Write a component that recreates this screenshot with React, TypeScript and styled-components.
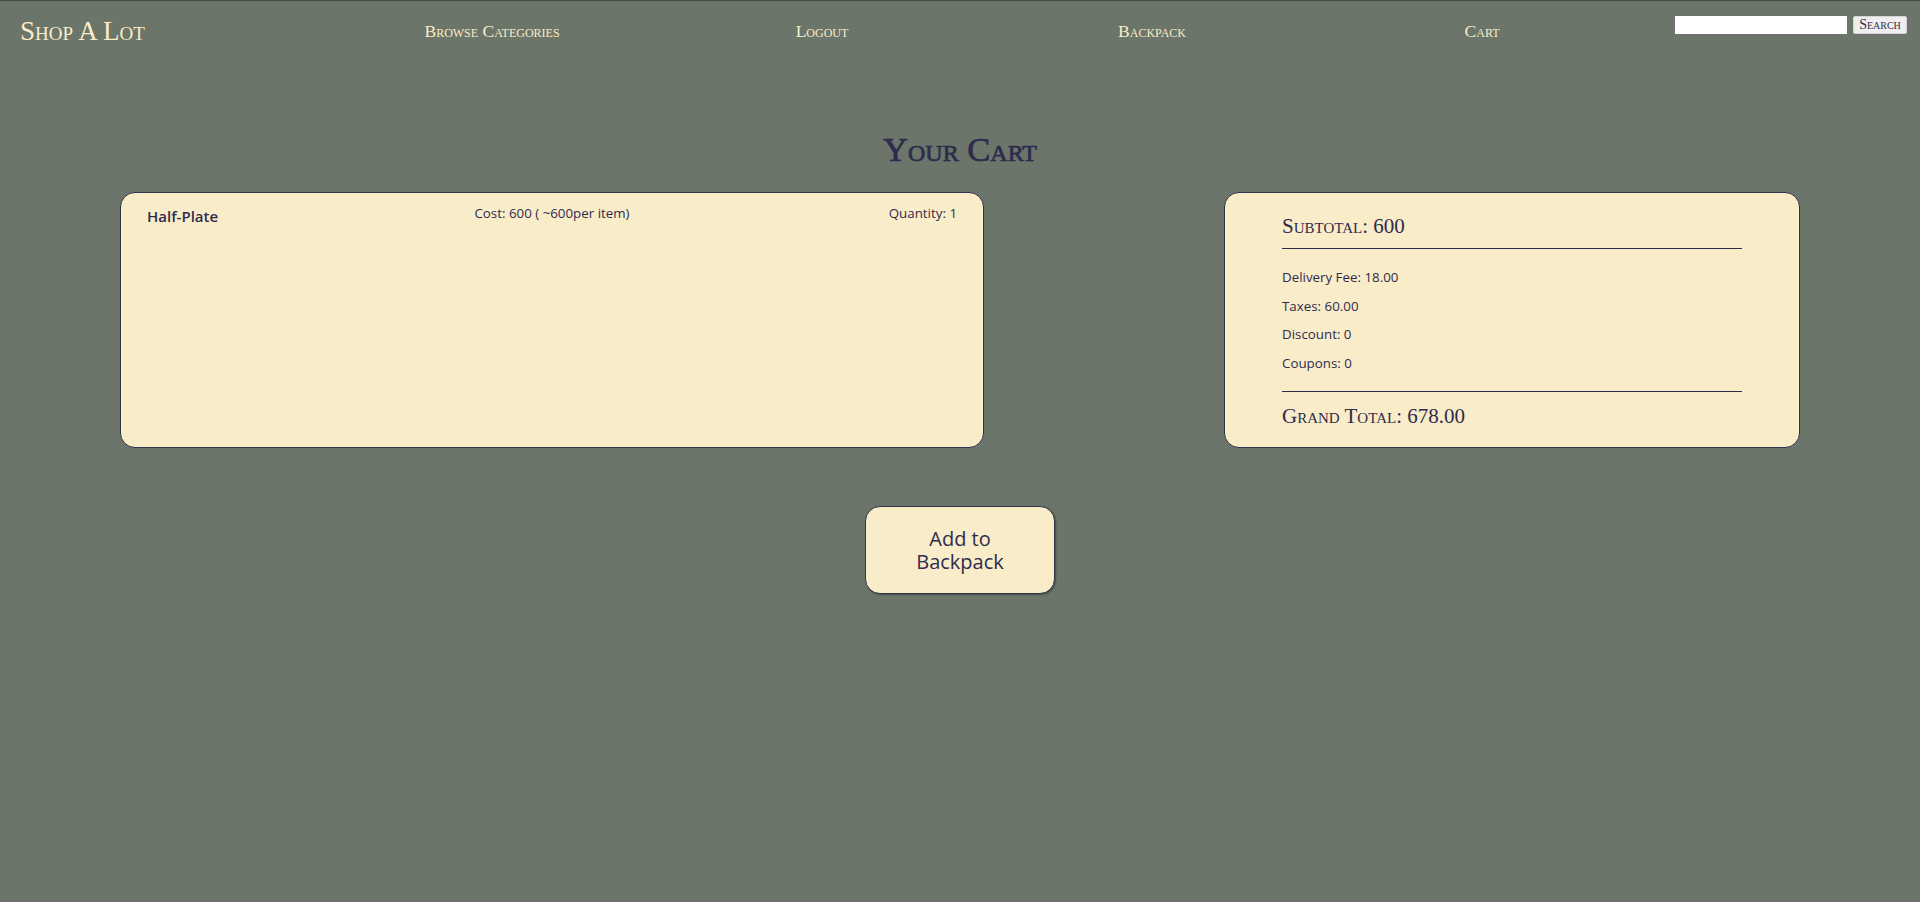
import React from "react";
import styled, { createGlobalStyle } from "styled-components";

const GlobalStyle = createGlobalStyle`
  html, body {
    margin: 0;
    padding: 0;
    background: #6b7569;
  }
  body {
    font-family: "Open Sans", "Liberation Sans", sans-serif;
    color: #2f2b4e;
    min-height: 902px;
    border-top: 1px solid #474c47;
    box-sizing: border-box;
  }
  * { box-sizing: border-box; }
`;

const Header = styled.header`
  display: grid;
  grid-template-columns: 307px repeat(4, 330px) 1fr;
  align-items: center;
  height: 61px;
  padding: 0 13px 0 20px;
`;

const Logo = styled.a`
  font-family: "Liberation Serif", serif;
  font-variant: small-caps;
  font-size: 27px;
  color: #f9ecc8;
  text-decoration: none;
  margin-top: -1px;
`;

const NavLink = styled.a`
  justify-self: center;
  font-family: "Liberation Serif", serif;
  font-variant: small-caps;
  font-size: 17.6px;
  color: #f9ecc8;
  text-decoration: none;
  margin-top: 0;
`;

const SearchForm = styled.form`
  display: flex;
  justify-self: end;
  align-self: start;
  margin-top: 15px;
  gap: 6px;
`;

const SearchInput = styled.input`
  width: 172px;
  height: 18px;
  border: none;
  padding: 0 4px;
  background: #ffffff;
  font-size: 12px;
`;

const SearchButton = styled.button`
  width: 54px;
  height: 18px;
  padding: 0;
  border: 1px solid #d4d4d4;
  border-radius: 2px;
  background: #efefef;
  font-family: "Liberation Serif", serif;
  font-variant: small-caps;
  font-size: 14px;
  color: #2f2b4e;
  line-height: 16px;
`;

const Main = styled.main`
  display: flex;
  flex-direction: column;
  align-items: center;
`;

const Title = styled.h1`
  margin: 67px 0 0;
  font-family: "Liberation Serif", serif;
  font-variant: small-caps;
  font-size: 34.5px;
  font-weight: normal;
  -webkit-text-stroke: 0.7px #2f2b4e;
  line-height: 40px;
  color: #2f2b4e;
`;

const CardsRow = styled.section`
  display: flex;
  justify-content: space-around;
  width: 100%;
  margin-top: 23px;
`;

const Card = styled.div<{ $width: string }>`
  width: ${(p) => p.$width};
  height: 256px;
  background: #f9ecc8;
  border: 1px solid #33304a;
  border-radius: 15px;
`;

const ItemRow = styled.div`
  display: grid;
  grid-template-columns: 1fr auto 1fr;
  align-items: start;
  padding: 11px 26px 0;
`;

const ItemName = styled.h3`
  margin: 2px 0 0;
  justify-self: start;
  font-size: 15px;
  font-weight: 600;
  color: #2f2b4e;
`;

const ItemInfo = styled.span<{ $align: string }>`
  justify-self: ${(p) => p.$align};
  font-size: 13.33px;
  line-height: 18px;
  color: #2f2b4e;
`;

const Summary = styled.div`
  display: flex;
  flex-direction: column;
  padding: 21px 57px 0;
`;

const SummaryHeading = styled.h2<{ $gap: number }>`
  margin: ${(p) => p.$gap}px 0 0;
  font-family: "Liberation Serif", serif;
  font-variant: small-caps;
  font-weight: normal;
  font-size: 21px;
  line-height: 25px;
  color: #2f2b4e;
`;

const Rule = styled.hr<{ $gap: number }>`
  width: 100%;
  margin: ${(p) => p.$gap}px 0 0;
  border: none;
  border-top: 1px solid #2f2b4e;
`;

const FeeList = styled.div`
  display: flex;
  flex-direction: column;
  gap: 10px;
  padding: 19px 0 19px;
`;

const FeeLine = styled.p`
  margin: 0;
  font-size: 13.33px;
  line-height: 18.6px;
  color: #2f2b4e;
`;

const ActionButton = styled.button`
  margin-top: 58px;
  width: 190px;
  height: 88px;
  background: #f9ecc8;
  border: 1px solid #33304a;
  border-radius: 15px;
  box-shadow: 1px 1px 2px rgba(0, 0, 0, 0.35);
  font-family: "Open Sans", "Liberation Sans", sans-serif;
  font-size: 20px;
  line-height: 23px;
  color: #2f2b4e;
  padding: 0 40px;
`;

export default function App() {
  return (
    <>
      <GlobalStyle />
      <Header>
        <Logo href="#">Shop A Lot</Logo>
        <NavLink href="#">Browse Categories</NavLink>
        <NavLink href="#">Logout</NavLink>
        <NavLink href="#">Backpack</NavLink>
        <NavLink href="#">Cart</NavLink>
        <SearchForm onSubmit={(e) => e.preventDefault()}>
          <SearchInput type="text" />
          <SearchButton type="submit">Search</SearchButton>
        </SearchForm>
      </Header>
      <Main>
        <Title>Your Cart</Title>
        <CardsRow>
          <Card $width="864px">
            <ItemRow>
              <ItemName>Half-Plate</ItemName>
              <ItemInfo $align="center">Cost: 600 ( ~600per item)</ItemInfo>
              <ItemInfo $align="end">Quantity: 1</ItemInfo>
            </ItemRow>
          </Card>
          <Card $width="576px">
            <Summary>
              <SummaryHeading $gap={0}>Subtotal: 600</SummaryHeading>
              <Rule $gap={9} />
              <FeeList>
                <FeeLine>Delivery Fee: 18.00</FeeLine>
                <FeeLine>Taxes: 60.00</FeeLine>
                <FeeLine>Discount: 0</FeeLine>
                <FeeLine>Coupons: 0</FeeLine>
              </FeeList>
              <Rule $gap={0} />
              <SummaryHeading $gap={12}>Grand Total: 678.00</SummaryHeading>
            </Summary>
          </Card>
        </CardsRow>
        <ActionButton>Add to Backpack</ActionButton>
      </Main>
    </>
  );
}
